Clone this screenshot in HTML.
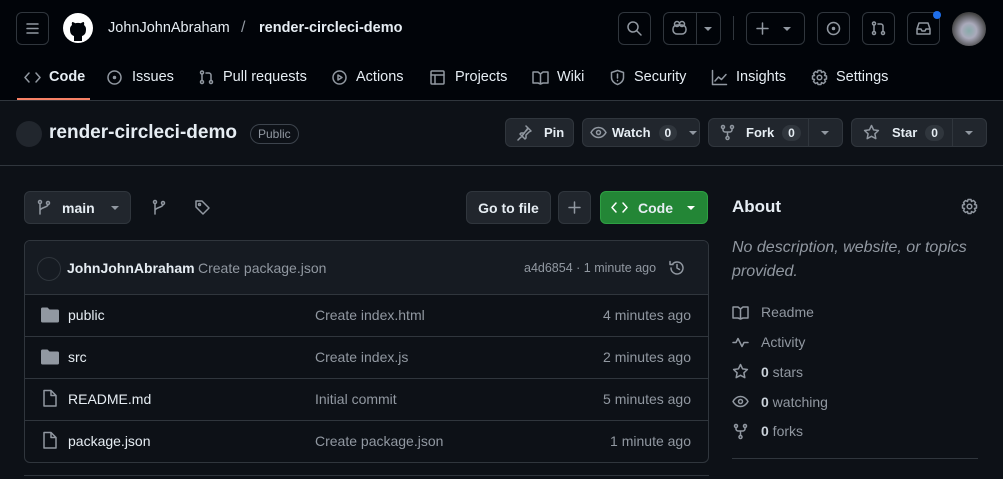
<!DOCTYPE html>
<html><head><meta charset="utf-8"><style>
*{box-sizing:border-box;margin:0;padding:0}
body{width:1003px;height:479px;overflow:hidden;background:#0d1117;font-family:"Liberation Sans",sans-serif;color:#e6edf3;position:relative;font-size:14px}
.a{position:absolute}
.hdr{left:0;top:0;width:1003px;height:101px;background:#010409;border-bottom:1px solid #30363d}
.btn{position:absolute;border:1px solid #30363d;border-radius:6px;background:#010409}
.b2{position:absolute;border:1px solid #30363d;border-radius:6px;background:#21262d;color:#e6edf3;font-weight:bold;font-size:13px;display:flex;align-items:center}
svg{position:absolute;fill:none;stroke:#9198a1;stroke-width:1.5;stroke-linecap:round;stroke-linejoin:round}
.nav{position:absolute;top:69px;font-size:14.5px;color:#e6edf3}
.cnt{display:inline-block;background:#30363d;border-radius:10px;padding:1px 6px;font-size:12px;margin-left:8px}
.caret{display:inline-block;width:0;height:0;border-left:4px solid transparent;border-right:4px solid transparent;border-top:4px solid #9198a1}
.ca{position:absolute;width:0;height:0;border-left:4px solid transparent;border-right:4px solid transparent;border-top:4px solid #9198a1}
.row{position:absolute;left:25px;width:683px;height:42px;border-top:1px solid #30363d;font-size:14px}
.row span{position:absolute;top:12px}
.g{color:#9198a1}
</style></head><body>
<div class="a hdr"></div>
<div class="btn" style="left:16px;top:12px;width:33px;height:33px"></div>
<svg style="left:24px;top:20px" width="17" height="17"><path d="M3 4h11M3 8.5h11M3 13h11"/></svg>
<div class="a" style="left:63px;top:13px;width:30px;height:30px;border-radius:50%;background:#fff"></div>
<svg style="left:67px;top:17px;fill:#010409;stroke:none" width="22" height="24"><path d="M7 24v-5c-3-1-4-3-4-7 0-2 1-3 2-4-.3-1-.3-2 .2-3 1 0 2 .5 3 1.2 1.5-.4 4-.4 5.6 0 1-.7 2-1.2 3-1.2.5 1 .5 2 .2 3 1 1 2 2 2 4 0 4-1 6-4 7v5z"/></svg>
<div class="a" style="left:108px;top:20px;font-size:14.5px;color:#e6edf3">JohnJohnAbraham</div>
<div class="a" style="left:241px;top:19px;font-size:16px;color:#9198a1">/</div>
<div class="a" style="left:259px;top:20px;font-size:14.5px;font-weight:bold">render-circleci-demo</div>
<div class="btn" style="left:618px;top:12px;width:33px;height:33px"></div>
<svg style="left:626px;top:20px" width="17" height="17"><circle cx="7" cy="7" r="5"/><path d="M11 11l4 4"/></svg>
<div class="btn" style="left:663px;top:12px;width:58px;height:33px"></div>
<div class="a" style="left:696px;top:13px;width:1px;height:31px;background:#30363d"></div>
<svg style="left:671px;top:20px" width="17" height="17"><rect x="2" y="5" width="13" height="9" rx="4"/><circle cx="6" cy="4" r="2.5"/><circle cx="11" cy="4" r="2.5"/></svg>
<div class="ca" style="left:704px;top:27px"></div>
<div class="a" style="left:733px;top:16px;width:1px;height:24px;background:#30363d"></div>
<div class="btn" style="left:746px;top:12px;width:59px;height:33px"></div>
<svg style="left:754px;top:20px" width="17" height="17"><path d="M8.5 3v11M3 8.5h11"/></svg>
<div class="ca" style="left:783px;top:27px"></div>
<div class="btn" style="left:817px;top:12px;width:33px;height:33px"></div>
<svg style="left:825px;top:20px" width="17" height="17"><circle cx="8.5" cy="8.5" r="6"/><circle cx="8.5" cy="8.5" r="1" fill="#9198a1"/></svg>
<div class="btn" style="left:862px;top:12px;width:33px;height:33px"></div>
<svg style="left:870px;top:20px" width="17" height="17"><circle cx="4" cy="3.5" r="1.5"/><circle cx="4" cy="13" r="1.5"/><circle cx="13" cy="13" r="1.5"/><path d="M4 5v6M13 11V6c0-1-1-2-2-2H8"/></svg>
<div class="btn" style="left:907px;top:12px;width:33px;height:33px"></div>
<svg style="left:915px;top:20px" width="17" height="17"><path d="M2 9l2-6h9l2 6v5H2zM2 9h4l1 2h3l1-2h4"/></svg>
<div class="a" style="left:933px;top:11px;width:8px;height:8px;border-radius:50%;background:#1f6feb"></div>
<div class="a" style="left:952px;top:12px;width:34px;height:34px;border-radius:50%;background:radial-gradient(circle at 50% 55%,#8aa 0,#aab 30%,#444 70%,#222 100%)"></div>
<svg style="left:24px;top:69px" width="17" height="17"><path d="M5 4L1 8.5 5 13M12 4l4 4.5-4 4.5"/></svg>
<div class="nav" style="left:49px;font-weight:bold">Code</div>
<div class="a" style="left:17px;top:98px;width:73px;height:2px;background:#f78166"></div>
<svg style="left:106px;top:69px" width="17" height="17"><circle cx="8.5" cy="8.5" r="6.5"/><circle cx="8.5" cy="8.5" r="1" fill="#9198a1"/></svg>
<div class="nav" style="left:132px">Issues</div>
<svg style="left:198px;top:69px" width="17" height="17"><circle cx="4" cy="3.5" r="1.5"/><circle cx="4" cy="13" r="1.5"/><circle cx="13" cy="13" r="1.5"/><path d="M4 5v6M13 11V6c0-1-1-2-2-2H8"/></svg>
<div class="nav" style="left:223px">Pull requests</div>
<svg style="left:331px;top:69px" width="17" height="17"><circle cx="8.5" cy="8.5" r="6.5"/><path d="M7 6v5l4-2.5z"/></svg>
<div class="nav" style="left:356px">Actions</div>
<svg style="left:429px;top:69px" width="17" height="17"><rect x="2" y="2" width="13" height="13" rx="1"/><path d="M2 6h13M6 6v9"/></svg>
<div class="nav" style="left:455px">Projects</div>
<svg style="left:532px;top:69px" width="17" height="17"><path d="M1 3h5l2.5 2 2.5-2h5v11h-5l-2.5 1-2.5-1H1zM8.5 5v10"/></svg>
<div class="nav" style="left:557px">Wiki</div>
<svg style="left:609px;top:69px" width="17" height="17"><path d="M8.5 1.5l6 2v5c0 3.5-3 6-6 7-3-1-6-3.5-6-7v-5z"/><path d="M8.5 5v4M8.5 11.5v.3"/></svg>
<div class="nav" style="left:634px">Security</div>
<svg style="left:711px;top:69px" width="17" height="17"><path d="M1.5 1.5v14h14M4 12l3.5-4 3 2.5 4.5-5"/></svg>
<div class="nav" style="left:736px">Insights</div>
<svg style="left:811px;top:69px" width="17" height="17"><circle cx="8.5" cy="8.5" r="2.3"/><path d="M7 1.5h3l.5 2 2-1 2 2-1 2 2 .5v3l-2 .5 1 2-2 2-2-1-.5 2H7l-.5-2-2 1-2-2 1-2-2-.5V7l2-.5-1-2 2-2 2 1z"/></svg>
<div class="nav" style="left:836px">Settings</div>
<div class="a" style="left:16px;top:121px;width:26px;height:26px;border-radius:50%;background:#21262d"></div>
<div class="a" style="left:49px;top:122px;font-size:19px;font-weight:bold">render-circleci-demo</div>
<div class="a" style="left:250px;top:124px;border:1px solid #3d444d;border-radius:12px;padding:2px 7px;font-size:12px;color:#9198a1">Public</div>
<div class="b2" style="left:505px;top:118px;width:69px;height:29px;padding-left:38px">Pin</div>
<svg style="left:516px;top:124px" width="17" height="17"><path d="M10 2l5 5-2 1-3 3v3l-1 1-3-3-4 4M6 12L4 10 5 9h3l3-3 1-2z"/></svg>
<div class="b2" style="left:582px;top:118px;width:118px;height:29px;padding-left:29px">Watch<span class="cnt">0</span><span class="caret" style="margin-left:12px"></span></div>
<svg style="left:590px;top:124px" width="17" height="17"><path d="M1 8.5C3 5 5.5 3.5 8.5 3.5S14 5 16 8.5c-2 3.5-4.5 5-7.5 5S3 12 1 8.5z"/><circle cx="8.5" cy="8.5" r="2"/></svg>
<div class="b2" style="left:708px;top:118px;width:135px;height:29px;padding-left:37px">Fork<span class="cnt">0</span></div>
<div class="a" style="left:808px;top:119px;width:1px;height:27px;background:#30363d"></div>
<div class="ca" style="left:821px;top:131px"></div>
<svg style="left:719px;top:124px" width="17" height="17"><circle cx="4" cy="3" r="1.5"/><circle cx="13" cy="3" r="1.5"/><circle cx="8.5" cy="14" r="1.5"/><path d="M4 4.5v1.5c0 1 1 2 2 2h5c1 0 2-1 2-2V4.5M8.5 8v4.5"/></svg>
<div class="b2" style="left:851px;top:118px;width:136px;height:29px;padding-left:40px">Star<span class="cnt">0</span></div>
<div class="a" style="left:952px;top:119px;width:1px;height:27px;background:#30363d"></div>
<div class="ca" style="left:965px;top:131px"></div>
<svg style="left:863px;top:124px" width="17" height="17"><path d="M8.5 1.5l2.1 4.4 4.8.6-3.5 3.3.9 4.8-4.3-2.3-4.3 2.3.9-4.8L1.6 6.5l4.8-.6z"/></svg>
<div class="a" style="left:0;top:165px;width:1003px;height:1px;background:#30363d"></div>
<div class="b2" style="left:24px;top:191px;width:107px;height:33px;padding-left:37px;font-size:14px">main<span class="caret" style="margin-left:16px"></span></div>
<svg style="left:36px;top:199px" width="17" height="17"><circle cx="4" cy="3" r="1.5"/><circle cx="12" cy="4" r="1.5"/><path d="M4 4.5V15M12 5.5c0 3-8 3-8 6"/></svg>
<svg style="left:151px;top:199px" width="17" height="17"><circle cx="4" cy="3" r="1.5"/><circle cx="12" cy="4" r="1.5"/><path d="M4 4.5V15M12 5.5c0 3-8 3-8 6"/></svg>
<svg style="left:194px;top:199px" width="17" height="17"><path d="M2 2h6l7 7-6 6-7-7z"/><circle cx="5.5" cy="5.5" r="1"/></svg>
<div class="b2" style="left:466px;top:191px;width:85px;height:33px;justify-content:center;font-size:14px">Go to file</div>
<div class="b2" style="left:558px;top:191px;width:33px;height:33px"></div>
<svg style="left:566px;top:199px" width="17" height="17"><path d="M8.5 3v11M3 8.5h11"/></svg>
<div class="b2" style="left:600px;top:191px;width:108px;height:33px;background:#238636;border-color:#2ea043;padding-left:37px;font-size:14px">Code<span class="caret" style="margin-left:14px;border-top-color:#fff"></span></div>
<svg style="left:611px;top:199px;stroke:#fff" width="17" height="17"><path d="M5 4L1 8.5 5 13M12 4l4 4.5-4 4.5"/></svg>
<div class="a" style="left:24px;top:240px;width:685px;height:223px;border:1px solid #30363d;border-radius:6px;overflow:hidden">
<div class="a" style="left:0;top:0;width:683px;height:54px;background:#161b22"></div>
</div>
<div class="a" style="left:37px;top:257px;width:24px;height:24px;border-radius:50%;border:1px solid #30363d"></div>
<div class="a" style="left:67px;top:260px;font-weight:bold">JohnJohnAbraham</div>
<div class="a g" style="left:198px;top:260px">Create package.json</div>
<div class="a g" style="left:524px;top:261px;font-size:12.5px">a4d6854 · 1 minute ago</div>
<svg style="left:668px;top:259px" width="18" height="18"><path d="M3 9a6 6 0 1 0 2-4.5M2 2.5v3h3M9 5.5V9l2.5 1.5"/></svg>
<div class="row" style="top:294px"><span style="left:43px">public</span><span class="g" style="left:290px">Create index.html</span><span class="g" style="right:17px">4 minutes ago</span></div>
<div class="row" style="top:336px"><span style="left:43px">src</span><span class="g" style="left:290px">Create index.js</span><span class="g" style="right:17px">2 minutes ago</span></div>
<div class="row" style="top:378px"><span style="left:43px">README.md</span><span class="g" style="left:290px">Initial commit</span><span class="g" style="right:17px">5 minutes ago</span></div>
<div class="row" style="top:420px"><span style="left:43px">package.json</span><span class="g" style="left:290px">Create package.json</span><span class="g" style="right:17px">1 minute ago</span></div>
<svg style="left:41px;top:307px;fill:#9198a1;stroke:none" width="18" height="16"><path d="M0 2c0-1 .5-1.5 1.5-1.5h5l2 2h8c1 0 1.5.5 1.5 1.5v10c0 1-.5 1.5-1.5 1.5h-15C.5 15.5 0 15 0 14z"/></svg>
<svg style="left:41px;top:349px;fill:#9198a1;stroke:none" width="18" height="16"><path d="M0 2c0-1 .5-1.5 1.5-1.5h5l2 2h8c1 0 1.5.5 1.5 1.5v10c0 1-.5 1.5-1.5 1.5h-15C.5 15.5 0 15 0 14z"/></svg>
<svg style="left:42px;top:389px" width="16" height="19"><path d="M2 1.5h7l5 5v10.5H2zM9 1.5v5h5"/></svg>
<svg style="left:42px;top:431px" width="16" height="19"><path d="M2 1.5h7l5 5v10.5H2zM9 1.5v5h5"/></svg>
<div class="a" style="left:24px;top:475px;width:685px;height:1px;background:#30363d"></div>
<div class="a" style="left:732px;top:197px;font-size:17px;font-weight:bold">About</div>
<svg style="left:961px;top:198px" width="17" height="17"><circle cx="8.5" cy="8.5" r="2.3"/><path d="M7 1.5h3l.5 2 2-1 2 2-1 2 2 .5v3l-2 .5 1 2-2 2-2-1-.5 2H7l-.5-2-2 1-2-2 1-2-2-.5V7l2-.5-1-2 2-2 2 1z"/></svg>
<div class="a g" style="left:732px;top:236px;font-size:16px;font-style:italic;line-height:24px;width:250px">No description, website, or topics provided.</div>
<svg style="left:732px;top:304px" width="17" height="17"><path d="M1 3h5l2.5 2 2.5-2h5v11h-5l-2.5 1-2.5-1H1zM8.5 5v10"/></svg>
<div class="a g" style="left:761px;top:304px">Readme</div>
<svg style="left:732px;top:334px" width="17" height="17"><path d="M1 8.5h3l2-4 4 8 2-4h4"/></svg>
<div class="a g" style="left:761px;top:334px">Activity</div>
<svg style="left:732px;top:363px" width="17" height="17"><path d="M8.5 1.5l2.1 4.4 4.8.6-3.5 3.3.9 4.8-4.3-2.3-4.3 2.3.9-4.8L1.6 6.5l4.8-.6z"/></svg>
<div class="a g" style="left:761px;top:364px"><b style="color:#c9d1d9">0</b> stars</div>
<svg style="left:732px;top:393px" width="17" height="17"><path d="M1 8.5C3 5 5.5 3.5 8.5 3.5S14 5 16 8.5c-2 3.5-4.5 5-7.5 5S3 12 1 8.5z"/><circle cx="8.5" cy="8.5" r="2"/></svg>
<div class="a g" style="left:761px;top:394px"><b style="color:#c9d1d9">0</b> watching</div>
<svg style="left:732px;top:423px" width="17" height="17"><circle cx="4" cy="3" r="1.5"/><circle cx="13" cy="3" r="1.5"/><circle cx="8.5" cy="14" r="1.5"/><path d="M4 4.5v1.5c0 1 1 2 2 2h5c1 0 2-1 2-2V4.5M8.5 8v4.5"/></svg>
<div class="a g" style="left:761px;top:423px"><b style="color:#c9d1d9">0</b> forks</div>
<div class="a" style="left:732px;top:458px;width:246px;height:1px;background:#30363d"></div>
</body></html>
